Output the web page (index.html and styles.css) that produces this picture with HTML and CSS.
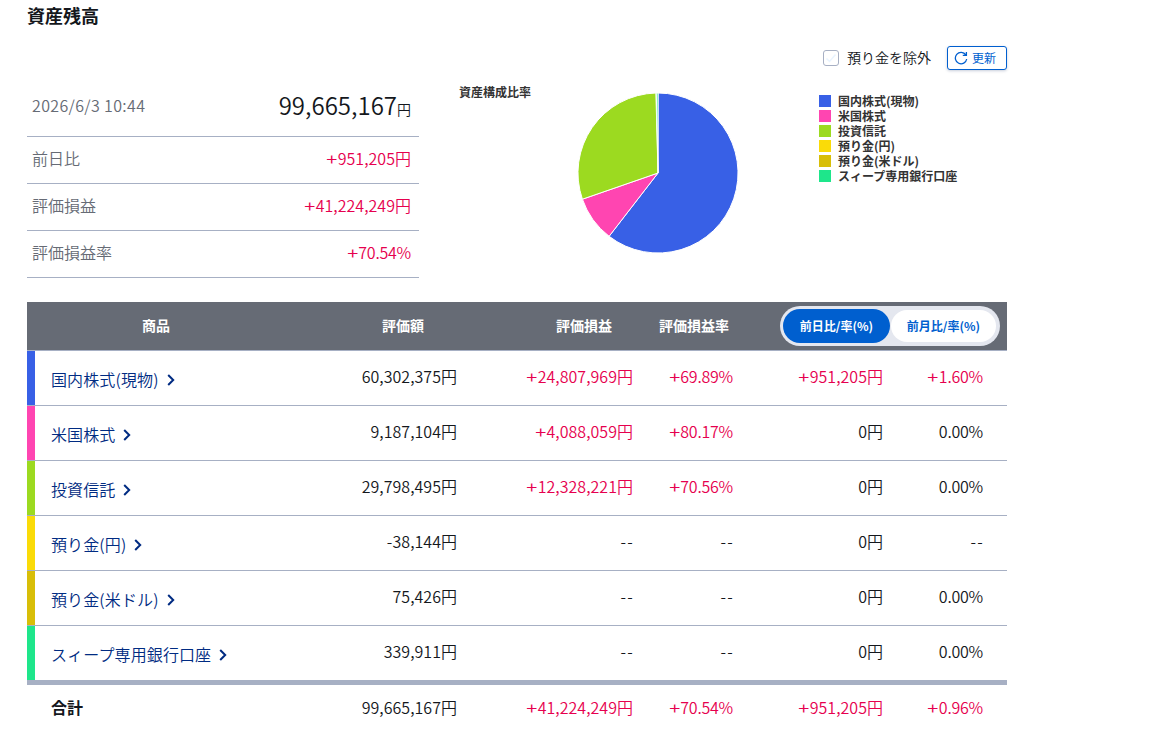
FILE: index.html
```html
<!DOCTYPE html>
<html lang="ja">
<head>
<meta charset="utf-8">
<title>資産残高</title>
<link rel="stylesheet" href="styles.css">
</head>
<body>
<main class="page">
  <h1 class="title">資産残高</h1>
  <div class="tools">
    <label class="exclude"><span class="checkbox"><svg width="14" height="14" viewBox="0 0 14 14"><path d="M2.5 7.5l3 3 6-7"/></svg></span>預り金を除外</label>
    <button class="refresh"><svg width="14" height="14" viewBox="0 0 14 14"><path d="M11.8 3.9A5.7 5.7 0 1 0 12.7 8M12.4 .9V4.4H8.8"/></svg>更新</button>
  </div>
  <section class="overview">
    <dl class="summary">
      <div class="line line-first"><dt class="date">2026/6/3 10:44</dt><dd class="total">99,665,167<small>円</small></dd></div>
      <div class="line"><dt>前日比</dt><dd class="up"><i>+</i>951,205<u>円</u></dd></div>
      <div class="line"><dt>評価損益</dt><dd class="up"><i>+</i>41,224,249<u>円</u></dd></div>
      <div class="line"><dt>評価損益率</dt><dd class="up"><i>+</i>70.54%</dd></div>
    </dl>
    <h2 class="chart-title">資産構成比率</h2>
    <svg class="pie" width="162" height="162" viewBox="-81 -81 162 162">
      <path class="s1" d="M0 0V-80A80 80 0 1 1 -48.9 63.3Z"/>
      <path class="s2" d="M0 0L-48.9 63.3A80 80 0 0 1 -75.6 26.2Z"/>
      <path class="s3" d="M0 0L-75.6 26.2A80 80 0 0 1 -2.1 -80Z"/>
      <path class="s6" d="M0 0L-1.7 -80H0Z"/>
    </svg>
    <ul class="legend">
      <li><b class="c1"></b>国内株式(現物)</li>
      <li><b class="c2"></b>米国株式</li>
      <li><b class="c3"></b>投資信託</li>
      <li><b class="c4"></b>預り金(円)</li>
      <li><b class="c5"></b>預り金(米ドル)</li>
      <li><b class="c6"></b>スィープ専用銀行口座</li>
    </ul>
  </section>
  <section class="table">
    <div class="head">
      <span>商品</span><span>評価額</span><span>評価損益</span><span>評価損益率</span>
      <div class="toggle"><span class="on">前日比/率(%)</span><span class="off">前月比/率(%)</span></div>
    </div>
    <div class="row"><a class="name k1">国内株式(現物)<svg class="arrow" viewBox="0 0 8 12"><path d="M1.2 1L6.2 6L1.2 11"/></svg></a><span>60,302,375<u>円</u></span><span class="up"><i>+</i>24,807,969<u>円</u></span><span class="up"><i>+</i>69.89%</span><span class="up"><i>+</i>951,205<u>円</u></span><span class="up"><i>+</i>1.60%</span></div>
    <div class="row"><a class="name k2">米国株式<svg class="arrow" viewBox="0 0 8 12"><path d="M1.2 1L6.2 6L1.2 11"/></svg></a><span>9,187,104<u>円</u></span><span class="up"><i>+</i>4,088,059<u>円</u></span><span class="up"><i>+</i>80.17%</span><span>0<u>円</u></span><span>0.00%</span></div>
    <div class="row"><a class="name k3">投資信託<svg class="arrow" viewBox="0 0 8 12"><path d="M1.2 1L6.2 6L1.2 11"/></svg></a><span>29,798,495<u>円</u></span><span class="up"><i>+</i>12,328,221<u>円</u></span><span class="up"><i>+</i>70.56%</span><span>0<u>円</u></span><span>0.00%</span></div>
    <div class="row"><a class="name k4">預り金(円)<svg class="arrow" viewBox="0 0 8 12"><path d="M1.2 1L6.2 6L1.2 11"/></svg></a><span><em>-</em>38,144<u>円</u></span><span><em>--</em></span><span><em>--</em></span><span>0<u>円</u></span><span><em>--</em></span></div>
    <div class="row"><a class="name k5">預り金(米ドル)<svg class="arrow" viewBox="0 0 8 12"><path d="M1.2 1L6.2 6L1.2 11"/></svg></a><span>75,426<u>円</u></span><span><em>--</em></span><span><em>--</em></span><span>0<u>円</u></span><span>0.00%</span></div>
    <div class="row row-last"><a class="name k6">スィープ専用銀行口座<svg class="arrow" viewBox="0 0 8 12"><path d="M1.2 1L6.2 6L1.2 11"/></svg></a><span>339,911<u>円</u></span><span><em>--</em></span><span><em>--</em></span><span>0<u>円</u></span><span>0.00%</span></div>
    <div class="row row-sum"><strong class="sum">合計</strong><span>99,665,167<u>円</u></span><span class="up"><i>+</i>41,224,249<u>円</u></span><span class="up"><i>+</i>70.54%</span><span class="up"><i>+</i>951,205<u>円</u></span><span class="up"><i>+</i>0.96%</span></div>
  </section>
</main>
</body>
</html>
```
FILE: styles.css
```css
* { box-sizing: border-box; }
body {
  margin: 0;
  overflow: hidden;
  background: #fff;
  color: #14171c;
  font: 350 16px/24px "Noto Sans CJK JP", sans-serif;
}
h1, h2, dl, dd, ul { margin: 0; padding: 0; list-style: none; }
i, em { font-style: normal; }
u { text-decoration: none; letter-spacing: 0; }
i { display: inline-block; width: 11.4px; text-align: center; transform: scaleX(1.25); }
em { letter-spacing: 1.4px; margin-right: -1.2px; }
.page { width: 980px; height: 730px; margin-left: 27px; padding-top: 2px; }
.title { font-size: 18px; line-height: 26px; font-weight: 700; }
.tools { display: flex; justify-content: flex-end; align-items: center; height: 24px; margin-top: 18px; font-size: 14px; }
.exclude { display: flex; align-items: center; gap: 8px; margin-right: 16px; line-height: 20px; padding-bottom: 2px; }
.checkbox { display: flex; width: 16px; height: 16px; margin-top: 2px; border: 1px solid #a7b0c4; border-radius: 3px; }
.checkbox path { fill: none; stroke: #e9f4ff; stroke-width: 1.5; }
.refresh {
  display: flex; align-items: center; gap: 4px;
  width: 60px; height: 24px; padding: 0 0 1px 6px;
  border: 1px solid #005fcf; border-radius: 3px; background: #fff;
  box-shadow: 0 1px 3px rgba(0, 30, 90, .22);
  color: #005fcf; font: 400 12px/20px "Noto Sans CJK JP", sans-serif;
}
.refresh svg { margin-top: 1px; }
.refresh path { fill: none; stroke: #005fcf; stroke-width: 1.3; }
.overview { display: flex; align-items: flex-start; height: 232px; padding-top: 6px; }
.summary { width: 392px; }
.line { display: flex; justify-content: space-between; align-items: center; height: 47px; padding: 0 8px 4px 5px; border-bottom: 1px solid #a7b0c4; }
.line-first { height: 61px; padding-bottom: 3px; }
dt { color: #666b75; }
.date { letter-spacing: .36px; }
dd, .row > span { letter-spacing: -.22px; }
dd:has(u), .row > span:has(u) { letter-spacing: .04px; }
.line .total { font-size: 24px; padding-top: 4px; letter-spacing: 0; }
.total small { font-size: 14px; }
.up { color: #e6004e; }
.chart-title { width: 118px; margin: 8px 0 0 40px; font-size: 12px; line-height: 16px; color: #333; white-space: nowrap; }
.pie { margin-top: 16px; }
.pie path { stroke: #fff; stroke-width: 1; stroke-linejoin: round; }
.s1 { fill: #3860e6; } .s2 { fill: #ff45b1; } .s3 { fill: #9cda20; } .s6 { fill: #1ee68b; }
.legend { margin: 17px 0 0 80px; font-size: 12px; line-height: 15px; font-weight: 700; color: #333; }
.legend li { display: flex; align-items: center; height: 15px; gap: 7px; }
.legend b { width: 12px; height: 12px; }
.c1 { background: #3860e6; } .c2 { background: #ff45b1; } .c3 { background: #9cda20; }
.c4 { background: #fadb08; } .c5 { background: #d8be08; } .c6 { background: #1ee68b; }
.head {
  display: grid; grid-template-columns: 258px 236px 126px 94px 266px; align-items: center;
  height: 49px; background: #666b75; border-bottom: 1px solid #a7b0c4;
  color: #fff; font-size: 14px; font-weight: 700; text-align: center;
}
.head > span { padding-bottom: 2px; }
.toggle { display: flex; align-items: center; width: 220px; height: 40px; margin-left: 39px; padding: 3px; border-radius: 20px; background: #e4e7ef; font-size: 12px; }
.toggle span { border-radius: 17px; }
.on { width: 107px; height: 34px; line-height: 33px; background: #005fcf; }
.off { width: 105px; height: 32px; margin-left: 1px; line-height: 31px; background: #fff; color: #005fcf; }
.row { display: grid; grid-template-columns: 258px 172px 176px 100px 150px 100px; height: 55px; padding-right: 24px; border-bottom: 1px solid #a7b0c4; text-align: right; line-height: 51px; }
.row-last { height: 59px; border-bottom-width: 5px; }
.row-sum { border-bottom: 0; height: 45px; line-height: 45px; }
.name { display: flex; align-items: center; height: 54px; padding: 3px 0 0 16px; border-left: 8px solid; color: #002b82; letter-spacing: .12px; }
.name, .sum { text-align: left; }
.sum { padding-left: 24px; font-weight: 700; }
.k1 { border-left-color: #3860e6; } .k2 { border-left-color: #ff45b1; } .k3 { border-left-color: #9cda20; }
.k4 { border-left-color: #fadb08; } .k5 { border-left-color: #d8be08; } .k6 { border-left-color: #1ee68b; }
.arrow { width: 8px; height: 12px; margin: 1px 0 0 8px; }
.arrow path { fill: none; stroke: #002b82; stroke-width: 2; }
```
